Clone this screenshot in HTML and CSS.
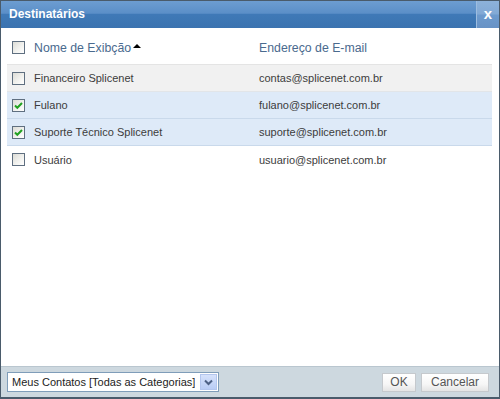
FILE: index.html
```html
<!DOCTYPE html>
<html>
<head>
<meta charset="utf-8">
<link rel="stylesheet" href="styles.css">
</head>
<body>
<div class="dialog">
  <div class="titlebar">
    <span class="title">Destinatários</span>
    <span class="close">x</span>
  </div>
  <div class="content">
    <div class="row head">
      <span class="cb"></span>
      <span class="col-name">Nome de Exibção<span class="sort"></span></span>
      <span class="col-mail">Endereço de E-mail</span>
    </div>
    <div class="row hover">
      <span class="cb"></span>
      <span class="col-name">Financeiro Splicenet</span>
      <span class="col-mail">contas@splicenet.com.br</span>
    </div>
    <div class="row sel">
      <span class="cb checked"><svg viewBox="0 0 11 11" width="11" height="11"><path d="M2 5.5 L4.3 7.8 L9 3" fill="none" stroke="#21a121" stroke-width="2"/></svg></span>
      <span class="col-name">Fulano</span>
      <span class="col-mail">fulano@splicenet.com.br</span>
    </div>
    <div class="row sel">
      <span class="cb checked"><svg viewBox="0 0 11 11" width="11" height="11"><path d="M2 5.5 L4.3 7.8 L9 3" fill="none" stroke="#21a121" stroke-width="2"/></svg></span>
      <span class="col-name">Suporte Técnico Splicenet</span>
      <span class="col-mail">suporte@splicenet.com.br</span>
    </div>
    <div class="row">
      <span class="cb"></span>
      <span class="col-name">Usuário</span>
      <span class="col-mail">usuario@splicenet.com.br</span>
    </div>
  </div>
  <div class="footer">
    <div class="select">
      <span class="select-text">Meus Contatos [Todas as Categorias]</span>
      <span class="select-btn"><svg viewBox="0 0 9 7" width="9" height="7"><path d="M1 1.5 L4.5 5 L8 1.5" fill="none" stroke="#4d6185" stroke-width="2"/></svg></span>
    </div>
    <div class="buttons">
      <span class="btn ok">OK</span>
      <span class="btn cancel">Cancelar</span>
    </div>
  </div>
</div>
</body>
</html>
```
FILE: styles.css
```css
* { box-sizing: border-box; }
html, body { margin: 0; padding: 0; }
body {
  width: 500px;
  height: 399px;
  font-family: "Liberation Sans", Arial, sans-serif;
  background: #fff;
}
.dialog {
  width: 500px;
  height: 399px;
  border: 1px solid #4a5b6b;
  border-bottom-width: 2px;
  display: flex;
  flex-direction: column;
  background: #fff;
}
.titlebar {
  height: 27px;
  flex: none;
  display: flex;
  align-items: stretch;
  justify-content: space-between;
  background: linear-gradient(to bottom, #6d9dd1 0%, #5b8fc8 45%, #3f79b7 50%, #3b73b0 100%);
}
.title {
  color: #fff;
  font-weight: bold;
  font-size: 12px;
  padding-left: 8px;
  line-height: 26px;
}
.close {
  width: 23px;
  background: linear-gradient(to bottom, #8db2da 0%, #82a9d5 48%, #6d9acd 52%, #6893c6 100%);
  border-left: 1px solid #9dbde0;
  color: #fff;
  font-weight: bold;
  font-size: 15px;
  text-align: center;
  line-height: 25px;
}
.content {
  flex: 1;
  padding: 3px 7px 0 6px;
}
.row {
  display: flex;
  align-items: center;
  height: 27px;
  border-bottom: 1px solid #e2e5e8;
  font-size: 11px;
  color: #3c3c3c;
}
.row.head {
  height: 34px;
  border-bottom: 1px solid #e4e4e4;
  font-size: 12.3px;
  color: #4a6a8e;
}
.row.hover { background: #f1f1f1; }
.row.sel { background: #deeaf8; border-bottom-color: #c9d9eb; }
.row:last-child { border-bottom: none; }
.cb {
  width: 13px;
  height: 13px;
  margin-left: 5px;
  margin-right: 9px;
  border: 1px solid #5f6f80;
  background: linear-gradient(135deg, #dcdcd6 0%, #f3f3f0 60%, #ffffff 100%);
  display: flex;
  align-items: center;
  justify-content: center;
  flex: none;
}
.row.head .cb { margin-top: -1px; }
.col-name {
  width: 225px;
  flex: none;
  display: flex;
  align-items: center;
}
.sort {
  width: 0;
  height: 0;
  border-left: 4px solid transparent;
  border-right: 4px solid transparent;
  border-bottom: 4px solid #000;
  margin-left: 2px;
  margin-top: -3px;
}
.col-mail { flex: 1; }
.footer {
  height: 31px;
  flex: none;
  background: #cdd8df;
  border-top: 1px solid #b9c6cf;
  display: flex;
  align-items: center;
  justify-content: space-between;
  padding: 0 10px 0 6px;
}
.select {
  width: 212px;
  height: 20px;
  background: #fff;
  border: 1px solid #7f9db9;
  display: flex;
  align-items: center;
  justify-content: space-between;
  padding-left: 4px;
  padding-right: 1px;
}
.select-text {
  font-size: 11px;
  color: #222;
  white-space: nowrap;
  overflow: hidden;
  min-width: 0;
}
.select-btn {
  width: 17px;
  height: 16px;
  flex: none;
  background: linear-gradient(to bottom, #d6e2fb 0%, #b9cdf5 100%);
  border: 1px solid #b3c6ee;
  display: flex;
  align-items: center;
  justify-content: center;
}
.buttons {
  display: flex;
  gap: 5px;
}
.btn {
  height: 19px;
  border: 1px solid #c5c9cd;
  background: linear-gradient(to bottom, #ffffff 0%, #f6f6f6 60%, #e4e4e4 100%);
  font-size: 12px;
  color: #555;
  line-height: 17px;
  text-align: center;
  white-space: nowrap;
}
.btn.ok { width: 34px; }
.btn.cancel { width: 68px; }
```
